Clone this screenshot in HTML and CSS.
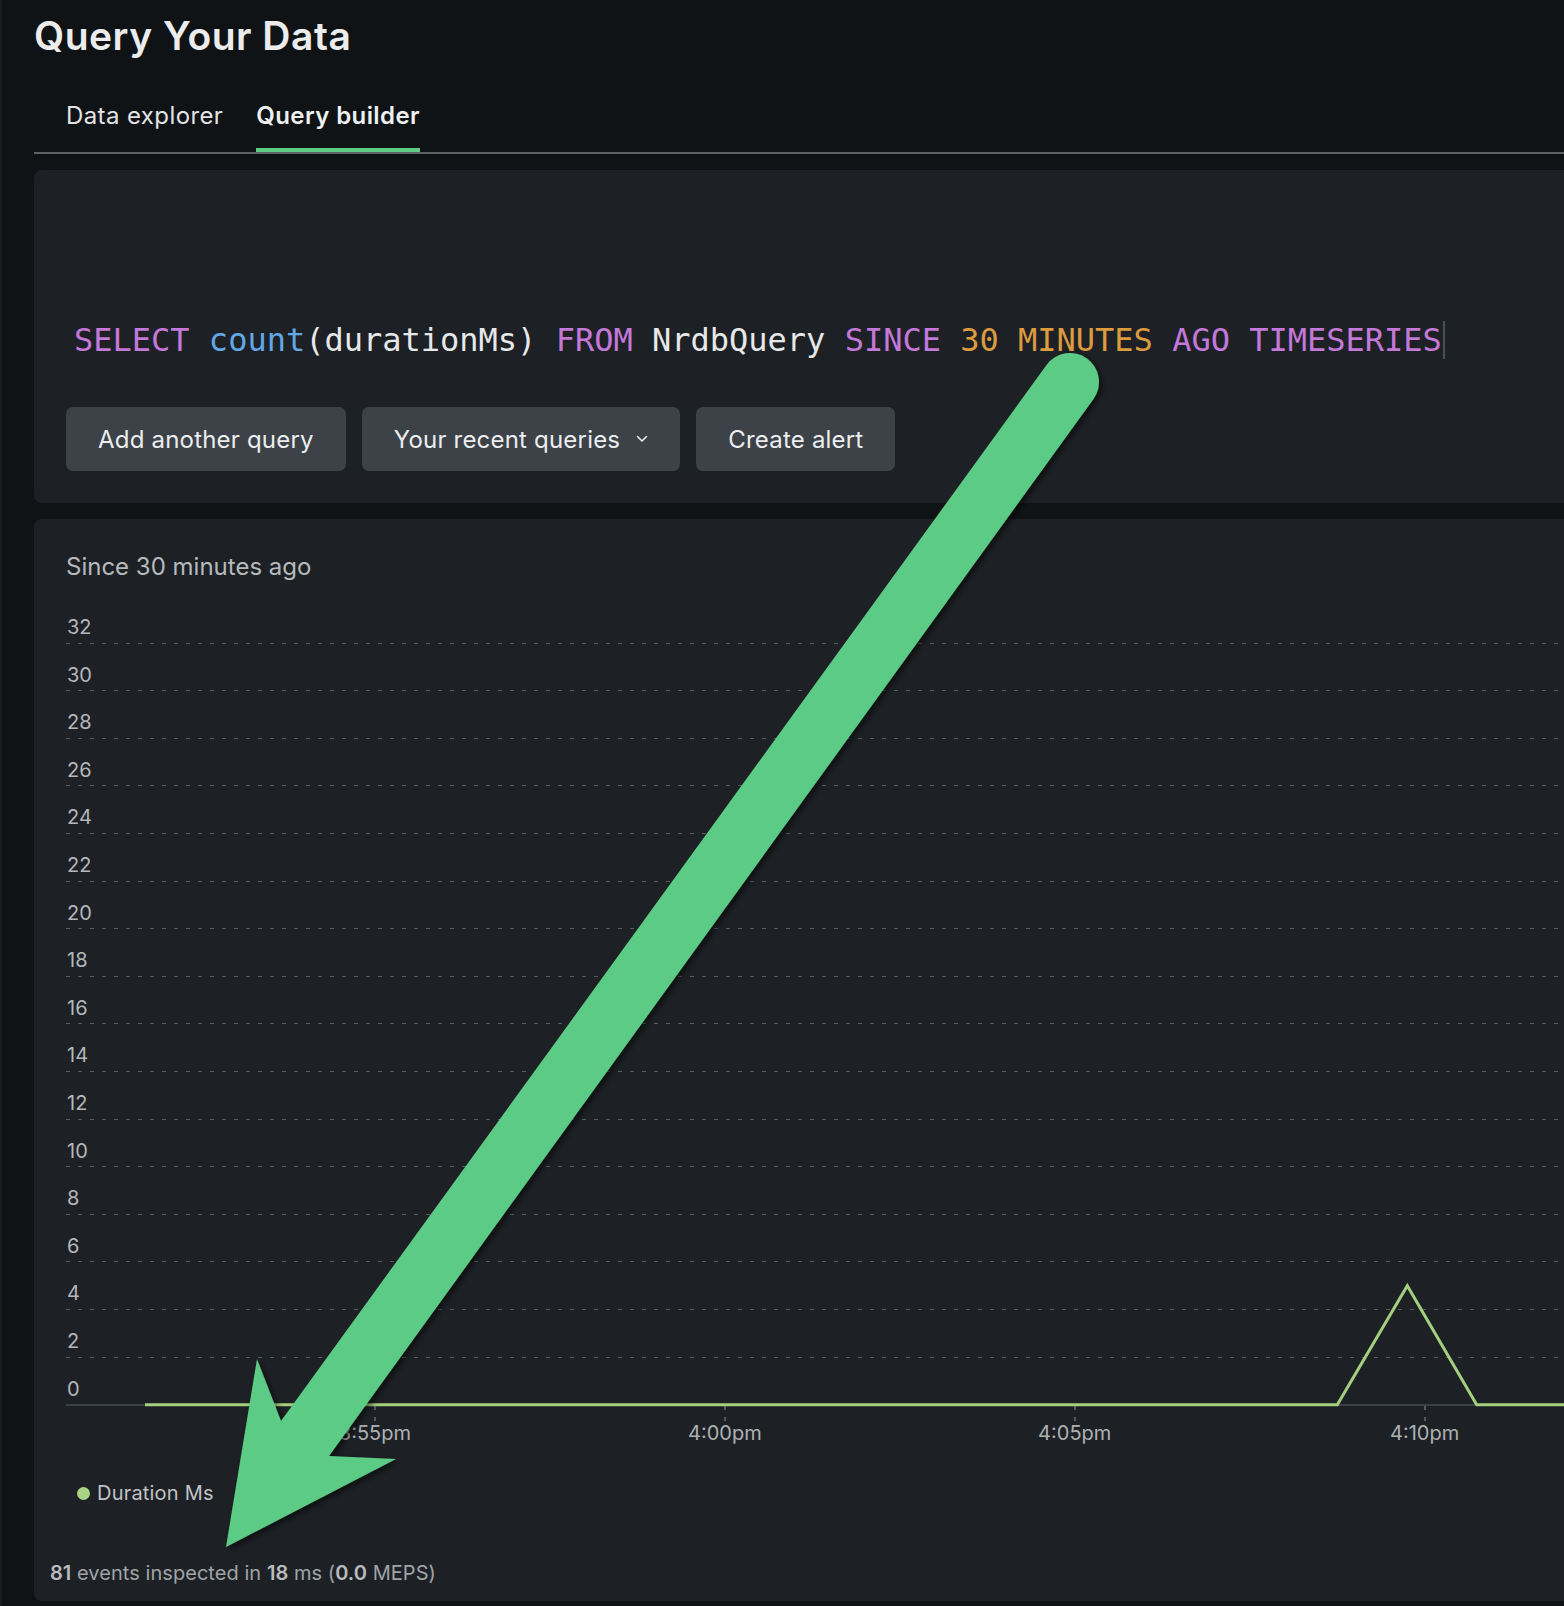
FILE: index.html
```html
<!DOCTYPE html>
<html lang="en">
<head>
<meta charset="utf-8">
<title>Query Your Data</title>
<link rel="stylesheet" href="styles.css">
</head>
<body>
<div class="page">
  <h1 class="title">Query Your Data</h1>
  <nav class="tabs">
    <span class="tab">Data explorer</span>
    <span class="tab tab-active">Query builder</span>
  </nav>

  <section class="panel query-panel">
    <div class="query"><span class="kw">SELECT</span> <span class="fn">count</span>(durationMs) <span class="kw">FROM</span> NrdbQuery <span class="kw">SINCE</span> <span class="num">30 MINUTES</span> <span class="kw">AGO</span> <span class="kw">TIMESERIES</span><span class="caret"></span></div>
    <div class="actions">
      <button class="btn">Add another query</button>
      <button class="btn">Your recent queries
        <svg class="chev" viewBox="0 0 12 8" width="12" height="8"><path d="M1.5 1.5 L6 6 L10.5 1.5" fill="none" stroke="#e9ebec" stroke-width="1.6" stroke-linecap="round" stroke-linejoin="round"/></svg>
      </button>
      <button class="btn">Create alert</button>
    </div>
  </section>

  <section class="panel chart-panel">
    <div class="chart-title">Since 30 minutes ago</div>
    <div class="chart">
      <div class="rows">
        <div class="row"><span class="ylabel">32</span></div>
        <div class="row"><span class="ylabel">30</span></div>
        <div class="row"><span class="ylabel">28</span></div>
        <div class="row"><span class="ylabel">26</span></div>
        <div class="row"><span class="ylabel">24</span></div>
        <div class="row"><span class="ylabel">22</span></div>
        <div class="row"><span class="ylabel">20</span></div>
        <div class="row"><span class="ylabel">18</span></div>
        <div class="row"><span class="ylabel">16</span></div>
        <div class="row"><span class="ylabel">14</span></div>
        <div class="row"><span class="ylabel">12</span></div>
        <div class="row"><span class="ylabel">10</span></div>
        <div class="row"><span class="ylabel">8</span></div>
        <div class="row"><span class="ylabel">6</span></div>
        <div class="row"><span class="ylabel">4</span></div>
        <div class="row"><span class="ylabel">2</span></div>
        <div class="row row-zero"><span class="ylabel">0</span></div>
      </div>
      <svg class="series" width="1500" height="811" viewBox="0 0 1500 811">
        <polyline points="79,808.7 1271.3,808.7 1341.3,689.7 1410.7,808.7 1500,808.7" fill="none" stroke="#a4cf7e" stroke-width="3" stroke-linejoin="miter"/>
      </svg>
      <div class="xaxis">
        <div class="xtick"><span class="tick"></span><span class="xlabel">3:55pm</span></div>
        <div class="xtick"><span class="tick"></span><span class="xlabel">4:00pm</span></div>
        <div class="xtick"><span class="tick"></span><span class="xlabel">4:05pm</span></div>
        <div class="xtick"><span class="tick"></span><span class="xlabel">4:10pm</span></div>
      </div>
    </div>
    <div class="legend"><span class="dot"></span><span class="legend-text">Duration Ms</span></div>
    <div class="footer"><b>81</b> events inspected in <b>18</b> ms (<b>0.0</b> MEPS)</div>
  </section>
</div>

<svg class="arrow" width="1564" height="1606" viewBox="0 0 1564 1606">
  <defs>
    <filter id="shadow" x="-20%" y="-20%" width="140%" height="140%">
      <feDropShadow dx="3" dy="3" stdDeviation="3" flood-color="#000" flood-opacity="0.55"/>
    </filter>
  </defs>
  <path filter="url(#shadow)" fill="#5ccb86" d="M281,1421 L1046.5,365 A29,29 0 0 1 1093.5,399 L329,1456 L396,1459 L226,1547 L257,1359 Z"/>
</svg>
</body>
</html>
```

FILE: styles.css
```css
html, body {
  margin: 0;
  padding: 0;
  overflow: hidden;
}

body {
  background: #0f1315;
  font-family: Inter, "Noto Sans", "Liberation Sans", sans-serif;
  color: #e6e7e8;
  position: relative;
  height: 1606px;
}

.page {
  box-sizing: border-box;
  height: 1606px;
  padding: 17px 0 0 32px;
  border-left: 2px solid #191d20;
}

.title {
  margin: 0;
  font-size: 39px;
  line-height: 38px;
  font-weight: 600;
  color: #ececed;
  letter-spacing: 0.5px;
}

.tabs {
  margin-top: 46px;
  display: flex;
  gap: 33px;
  padding-left: 32px;
  border-bottom: 2px solid #5c6063;
}

.tab {
  font-size: 24px;
  line-height: 29px;
  letter-spacing: 0.4px;
  padding-bottom: 18px;
  border-bottom: 4px solid transparent;
  color: #e2e3e4;
}

.tab-active {
  font-weight: 600;
  color: #eef0f1;
  border-bottom-color: #5fcb85;
}

.panel {
  background: #1d2125;
  border-radius: 8px 0 0 8px;
  margin-top: 16px;
}

.query-panel {
  padding: 150px 0 32px 32px;
}

.query {
  font-family: "DejaVu Sans Mono", "Liberation Mono", monospace;
  font-size: 32px;
  line-height: 40px;
  color: #e7e8e9;
  padding-left: 8px;
  white-space: pre;
}

.kw { color: #c478d9; }
.fn { color: #62a7e6; }
.num { color: #dd9b3f; }

.caret {
  display: inline-block;
  width: 2px;
  height: 38px;
  margin-left: 1px;
  vertical-align: top;
  margin-top: 1px;
  background: #4a4f54;
}

.actions {
  margin-top: 47px;
  display: flex;
  gap: 16px;
}

.btn {
  height: 64px;
  padding: 0 32px;
  border: 0;
  border-radius: 7px;
  background: #3c4247;
  color: #eceeef;
  font-family: Inter, "Noto Sans", "Liberation Sans", sans-serif;
  font-size: 24px;
  letter-spacing: 0.2px;
  display: flex;
  align-items: center;
  gap: 16px;
}

.chev {
  display: block;
}

.chart-panel {
  padding: 33px 0 16px 16px;
}

.chart-title {
  margin-left: 16px;
  font-size: 24px;
  line-height: 29px;
  color: #b6babd;
}

.chart {
  margin-left: 16px;
  margin-top: 15px;
  position: relative;
}

.row {
  height: 47.6px;
  box-sizing: border-box;
  display: flex;
  align-items: flex-end;
  padding-bottom: 4.6px;
  background: repeating-linear-gradient(to right, #585d61 0 4px, transparent 4px 12px) left bottom / 100% 1px no-repeat;
}

.row-zero {
  height: 48.6px;
  padding-bottom: 5.5px;
  background: linear-gradient(#3b4044, #3b4044) left bottom / 100% 2px no-repeat;
}

.ylabel {
  font-size: 20px;
  line-height: 24px;
  color: #b3b7ba;
  padding-left: 1px;
}

.series {
  position: absolute;
  left: 0;
  top: 0;
  overflow: visible;
}

.xaxis {
  display: flex;
  padding-left: 134px;
}

.xtick {
  flex: 0 0 349.9px;
  display: flex;
  flex-direction: column;
  align-items: center;
}

.tick {
  width: 2px;
  height: 15px;
  background: repeating-linear-gradient(to bottom, #565b5f 0 4px, transparent 4px 11px);
}

.xlabel {
  font-size: 20px;
  line-height: 24px;
  color: #adb1b4;
}

.legend {
  margin: 36px 0 0 27px;
  display: flex;
  align-items: center;
  gap: 7px;
}

.dot {
  width: 13px;
  height: 13px;
  border-radius: 50%;
  background: #a8d483;
}

.legend-text {
  font-size: 20px;
  line-height: 24px;
  letter-spacing: 0.2px;
  color: #c0c3c6;
}

.footer {
  margin-top: 56px;
  font-size: 20px;
  line-height: 24px;
  letter-spacing: 0.05px;
  color: #a0a4a8;
}

.footer b {
  font-weight: 600;
  color: #b9bcbf;
}

.arrow {
  position: absolute;
  left: 0;
  top: 0;
  pointer-events: none;
}
```
